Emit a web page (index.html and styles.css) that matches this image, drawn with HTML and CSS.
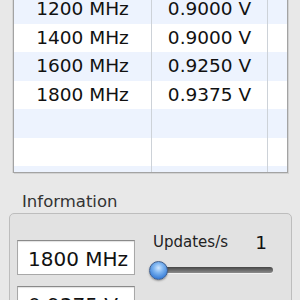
FILE: index.html
```html
<!DOCTYPE html>
<html lang="en">
<head>
  <meta charset="UTF-8">
  <title>CPU Frequencies</title>
  <link rel="stylesheet" href="styles.css">
</head>
<body>

  <div class="panel">
    <!-- Frequency / voltage table -->
    <div class="table-frame">
      <div class="row">
        <div class="cell freq">1200 MHz</div>
        <div class="cell volt">0.9000 V</div>
        <div class="cell spare"></div>
      </div>
      <div class="row">
        <div class="cell freq">1400 MHz</div>
        <div class="cell volt">0.9000 V</div>
        <div class="cell spare"></div>
      </div>
      <div class="row">
        <div class="cell freq">1600 MHz</div>
        <div class="cell volt">0.9250 V</div>
        <div class="cell spare"></div>
      </div>
      <div class="row">
        <div class="cell freq">1800 MHz</div>
        <div class="cell volt">0.9375 V</div>
        <div class="cell spare"></div>
      </div>
      <div class="row">
        <div class="cell freq"></div>
        <div class="cell volt"></div>
        <div class="cell spare"></div>
      </div>
      <div class="row">
        <div class="cell freq"></div>
        <div class="cell volt"></div>
        <div class="cell spare"></div>
      </div>
      <div class="row last">
        <div class="cell freq"></div>
        <div class="cell volt"></div>
        <div class="cell spare"></div>
      </div>
    </div>

    <div class="group-title">Information</div>

    <div class="group-box">
      <div class="fields">
        <div class="field">1800 MHz</div>
        <div class="field">0.9375 V</div>
      </div>
      <div class="updates">
        <div class="updates-head">
          <span class="updates-label">Updates/s</span>
          <span class="updates-value">1</span>
        </div>
        <div class="slider">
          <div class="track"></div>
          <div class="knob"></div>
        </div>
      </div>
    </div>
  </div>

</body>
</html>
```

FILE: styles.css
```css
* {
  box-sizing: border-box;
  margin: 0;
  padding: 0;
}

body {
  font-family: "DejaVu Sans", "Liberation Sans", sans-serif;
  background-color: #e8e8e8;
  color: #111;
  overflow: hidden;
}

.panel {
  display: flex;
  flex-direction: column;
}

/* table */

.table-frame {
  margin: -5px 0 0 13px;
  width: 275px;
  height: 178px;
  background-color: #fff;
  border: 1px solid #a3a3a3;
  border-top: none;
  box-shadow: 1px 1px 0 #d2d2d2, -1px 0 0 #d6d6d6;
  overflow: hidden;
}

.row {
  display: flex;
  height: 28.5px;
}

.row:nth-child(odd) {
  background-color: #edf3fe;
}

.row.last {
  height: 7px;
}

.cell {
  font-size: 18.5px;
  line-height: 28.5px;
  text-align: center;
  white-space: nowrap;
}

.freq {
  width: 138px;
  border-right: 1px solid #cdd2d8;
}

.volt {
  width: 116px;
  border-right: 1px solid #cdd2d8;
}

.spare {
  flex: 1;
}

/* information box */

.group-title {
  margin: 19px 0 0 22px;
  font-size: 16.5px;
  line-height: 20px;
  color: #333;
}

.group-box {
  margin: 1px 0 0 9px;
  width: 283px;
  height: 100px;
  display: flex;
  gap: 15px;
  padding: 26px 0 0 7px;
  background-color: #e2e2e2;
  border: 1px solid #bdbdbd;
  border-radius: 5px;
}

.fields {
  display: flex;
  flex-direction: column;
  gap: 11px;
  width: 118px;
}

.field {
  height: 35px;
  padding: 4px 0 0 10px;
  font-size: 20px;
  line-height: 29px;
  background-color: #fff;
  border: 1px solid #a8a8a8;
  border-top-color: #8a8a8a;
  box-shadow: inset 0 1px 1px rgba(0, 0, 0, 0.12);
  white-space: nowrap;
}

.updates {
  width: 123px;
  padding-top: 0;
  margin-top: -8px;
}

.updates-head {
  display: flex;
  justify-content: space-between;
  align-items: baseline;
  padding: 0 6px 0 3px;
}

.updates-label {
  font-size: 15px;
  line-height: 18px;
  color: #222;
}

.updates-value {
  font-size: 18.5px;
  line-height: 18px;
  position: relative;
  top: 2px;
}

.slider {
  position: relative;
  height: 19px;
  margin-top: 10px;
}

.track {
  position: absolute;
  left: 2px;
  right: 0;
  top: 6px;
  height: 6px;
  border-radius: 3px;
  background: linear-gradient(#454545, #8d8d8d);
  box-shadow: 0 1px 0 rgba(255, 255, 255, 0.6);
}

.knob {
  position: absolute;
  left: -1px;
  top: 0;
  width: 19px;
  height: 19px;
  border-radius: 50%;
  background: radial-gradient(circle at 50% 35%, #cfe6ff 0%, #7db4f0 35%, #3b7fd8 75%, #2a5fb0 100%);
  border: 1px solid #3f5f8f;
  box-shadow: 0 1px 2px rgba(0, 0, 0, 0.35);
}
```
